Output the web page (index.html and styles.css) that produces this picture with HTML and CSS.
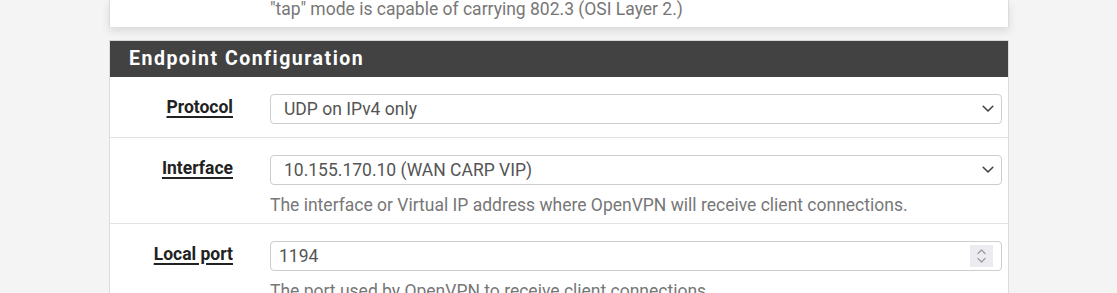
FILE: index.html
```html
<!DOCTYPE html>
<html lang="en">
<head>
<meta charset="utf-8">
<title>Endpoint Configuration</title>
<link rel="stylesheet" href="styles.css">
</head>
<body>
<div class="page">
  <div class="panel panel-prev">
    <div class="form-row form-row-last">
      <div class="label-col"></div>
      <div class="field-col">
        <div class="help help-top">"tap" mode is capable of carrying 802.3 (OSI Layer 2.)</div>
      </div>
    </div>
  </div>

  <div class="panel panel-main">
    <h2 class="panel-heading">Endpoint Configuration</h2>

    <div class="form-row">
      <div class="label-col"><span class="label">Protocol</span></div>
      <div class="field-col">
        <div class="select">
          <span class="select-text">UDP on IPv4 only</span>
          <svg class="chevron" width="12" height="8" viewBox="0 0 12 8"><path d="M1.2 1.3 L6 6 L10.8 1.3" fill="none" stroke="#444" stroke-width="1.6" stroke-linecap="round" stroke-linejoin="round"/></svg>
        </div>
      </div>
    </div>

    <div class="form-row">
      <div class="label-col"><span class="label">Interface</span></div>
      <div class="field-col">
        <div class="select">
          <span class="select-text">10.155.170.10 (WAN CARP VIP)</span>
          <svg class="chevron" width="12" height="8" viewBox="0 0 12 8"><path d="M1.2 1.3 L6 6 L10.8 1.3" fill="none" stroke="#444" stroke-width="1.6" stroke-linecap="round" stroke-linejoin="round"/></svg>
        </div>
        <div class="help">The interface or Virtual IP address where OpenVPN will receive client connections.</div>
      </div>
    </div>

    <div class="form-row">
      <div class="label-col"><span class="label">Local port</span></div>
      <div class="field-col">
        <div class="number">
          <span class="number-text">1194</span>
          <span class="spinner">
            <svg width="9" height="16" viewBox="0 0 9 16"><path d="M1 5.5 L4.5 2 L8 5.5" fill="none" stroke="#9a9aa2" stroke-width="1.2" stroke-linecap="round" stroke-linejoin="round"/><path d="M1 10.5 L4.5 14 L8 10.5" fill="none" stroke="#9a9aa2" stroke-width="1.2" stroke-linecap="round" stroke-linejoin="round"/></svg>
          </span>
        </div>
        <div class="help">The port used by OpenVPN to receive client connections.</div>
      </div>
    </div>
  </div>
</div>
</body>
</html>
```
FILE: styles.css
```css
* { box-sizing: border-box; }

html, body {
  margin: 0;
  padding: 0;
  background: #f4f4f4;
  font-family: Roboto, "Liberation Sans", Arial, sans-serif;
  font-size: 17.5px;
  color: #222;
  overflow: hidden;
}

.page {
  margin-left: 109px;
  width: 900px;
}

.panel {
  background: #fff;
  border-left: 1px solid #dcdcdc;
  border-right: 1px solid #dcdcdc;
}

.panel-prev {
  padding: 0 0 9px;
  box-shadow: 0 4px 9px rgba(0, 0, 0, 0.11);
  margin-bottom: 13px;
}

.panel-main {
  border-top: 1px solid #d6d6d6;
}

.panel-heading {
  margin: 0;
  height: 36px;
  line-height: 36px;
  background: #424242;
  color: #fff;
  font-size: 19.5px;
  font-weight: 700;
  letter-spacing: 1.5px;
  padding-left: 19px;
}

.form-row {
  display: grid;
  grid-template-columns: 138px 1fr;
  column-gap: 22px;
  padding: 17px 6px 13px 0;
  border-bottom: 1px solid #e2e2e2;
}

.form-row-last {
  padding: 0 6px 0 0;
  border-bottom: none;
}

.label-col {
  text-align: right;
  padding-right: 15px;
  line-height: 26px;
}

.label {
  font-weight: 700;
  color: #222;
  text-decoration: underline;
  text-decoration-thickness: 1.5px;
  text-underline-offset: 3px;
}

.select,
.number {
  display: flex;
  align-items: center;
  height: 30px;
  border: 1px solid #cdcdcd;
  border-radius: 4px;
  background: #fff;
  color: #555;
}

.select {
  padding: 0 7px 0 13px;
}

.number {
  padding: 0 7px 0 8px;
}

.select-text,
.number-text {
  flex: 1;
  line-height: 28px;
}

.chevron {
  display: block;
}

.spinner {
  display: flex;
  align-items: center;
  justify-content: center;
  width: 23px;
  height: 22px;
  background: #ebebf0;
  margin-right: 1px;
}

.spinner svg {
  display: block;
}

.help {
  color: #777;
  line-height: 20px;
  margin: 10px 0 -5px;
}

.help-top {
  margin: 0;
  line-height: 18px;
}
```
